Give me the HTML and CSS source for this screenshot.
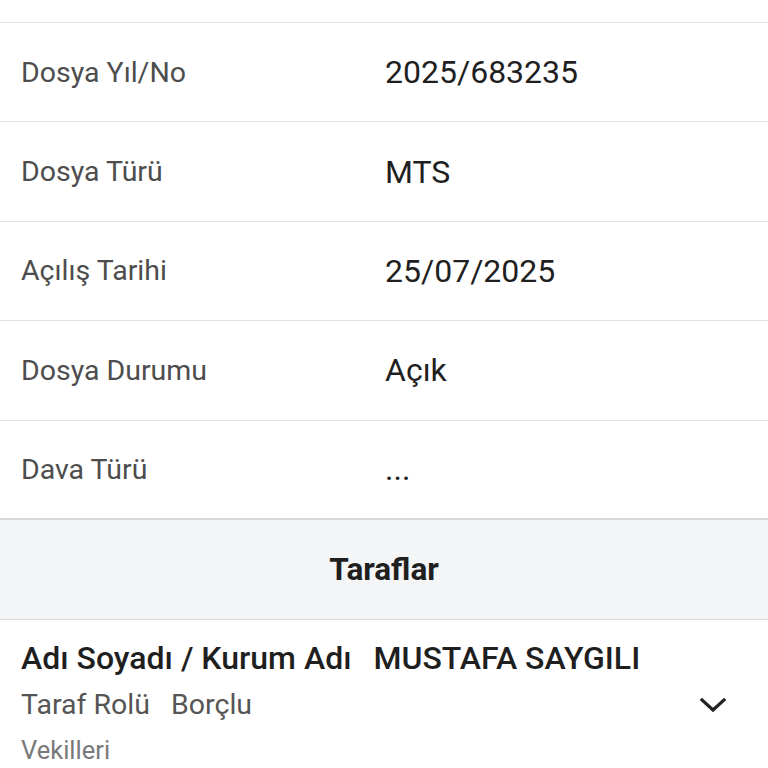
FILE: index.html
```html
<!DOCTYPE html>
<html lang="tr">
<head>
  <meta charset="UTF-8" />
  <meta name="viewport" content="width=device-width, initial-scale=1.0" />
  <title>Dosya Detayı</title>
  <link rel="stylesheet" href="styles.css">
</head>
<body>

  <div class="detail">
    <div class="row row-top"></div>

    <div class="row">
      <div class="label">Dosya Yıl/No</div>
      <div class="value">2025/683235</div>
    </div>
    <div class="row">
      <div class="label">Dosya Türü</div>
      <div class="value">MTS</div>
    </div>
    <div class="row">
      <div class="label">Açılış Tarihi</div>
      <div class="value">25/07/2025</div>
    </div>
    <div class="row">
      <div class="label">Dosya Durumu</div>
      <div class="value">Açık</div>
    </div>
    <div class="row row-last">
      <div class="label">Dava Türü</div>
      <div class="value">...</div>
    </div>

    <div class="section-title">Taraflar</div>

    <div class="party">
      <div class="party-name">
        <span>Adı Soyadı / Kurum Adı</span>
        <span class="party-value">MUSTAFA SAYGILI</span>
      </div>
      <div class="party-role">
        <div>
          <span>Taraf Rolü</span>
          <span class="role-value">Borçlu</span>
        </div>
        <svg class="chevron" width="26" height="18" viewBox="0 0 26 18">
          <path d="M2 4 L13 14 L24 4" fill="none" stroke="#222" stroke-width="3.2" stroke-linecap="square"/>
        </svg>
      </div>
      <div class="party-sub">Vekilleri</div>
    </div>
  </div>

</body>
</html>
```

FILE: styles.css
```css
body {
  margin: 0;
  padding: 0;
  background-color: #fff;
  font-family: Roboto, 'Noto Sans', sans-serif;
}

.detail {
  width: 768px;
}

.row {
  box-sizing: border-box;
  height: 99.4px;
  display: grid;
  grid-template-columns: 364px 1fr;
  align-items: center;
  padding-left: 21px;
  border-bottom: 1.5px solid #e3e3e3;
}

.row-top {
  height: 23px;
}

.row-last {
  border-bottom: 2px solid #d8d8d8;
}

.label {
  font-size: 28.5px;
  color: #4d4d4d;
}

.value {
  font-size: 32px;
  color: #1f1f1f;
}

.section-title {
  box-sizing: border-box;
  height: 100px;
  display: flex;
  align-items: center;
  justify-content: center;
  background-color: #f4f5f7;
  border-bottom: 1.5px solid #dedede;
  font-size: 31.5px;
  font-weight: bold;
  color: #1f1f1f;
}

.party {
  padding: 18px 42px 0 21px;
}

.party-name {
  display: flex;
  gap: 22px;
  height: 40px;
  align-items: center;
  font-size: 32px;
  font-weight: 500;
  color: #1f1f1f;
}

.party-role {
  display: flex;
  justify-content: space-between;
  align-items: center;
  height: 40px;
  margin-top: 7px;
  font-size: 28.5px;
  color: #555;
}

.role-value {
  margin-left: 14px;
}

.party-sub {
  height: 36px;
  display: flex;
  align-items: center;
  margin-top: 7px;
  font-size: 25.5px;
  color: #7a7a7a;
}
```
